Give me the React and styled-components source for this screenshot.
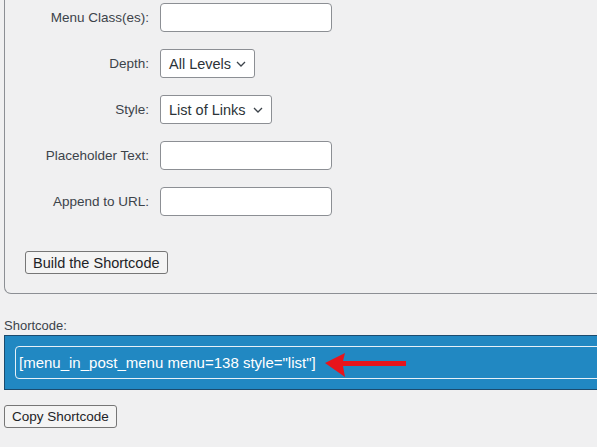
import styled, { createGlobalStyle } from "styled-components";

const GlobalStyle = createGlobalStyle`
  html, body {
    margin: 0;
    padding: 0;
    background: #f0f0f1;
    overflow: hidden;
  }
  body {
    font-family: "Liberation Sans", Arial, sans-serif;
    color: #1d2327;
  }
`;

const Page = styled.div`
  width: 597px;
  height: 447px;
  overflow: hidden;
  position: relative;
`;

const Panel = styled.div`
  margin-left: 4px;
  width: 700px;
  border: 1px solid #8c8f94;
  border-top: none;
  border-radius: 0 0 0 7px;
  padding: 3px 0 19px 0;
`;

const FormGrid = styled.div`
  display: grid;
  grid-template-columns: 144px auto;
  column-gap: 11px;
  row-gap: 17px;
  align-items: center;
  justify-items: start;
`;

const Label = styled.label`
  justify-self: end;
  font-size: 13.5px;
  color: #3c434a;
`;

const TextInput = styled.input`
  box-sizing: border-box;
  width: 172px;
  height: 29px;
  border: 1px solid #8c8f94;
  border-radius: 4px;
  background: #fff;
  font-size: 14px;
  padding: 0 8px;
`;

const SelectBox = styled.div`
  box-sizing: border-box;
  width: ${(p) => p.$width}px;
  height: 29px;
  border: 1px solid #8c8f94;
  border-radius: 3px;
  background: #fff;
  display: flex;
  align-items: center;
  justify-content: space-between;
  padding: 0 8px 0 8px;
  font-size: 14.5px;
  color: #2c3338;
`;

const Chevron = () => (
  <svg width="10" height="6" viewBox="0 0 10 6">
    <path d="M1 1 L5 5 L9 1" fill="none" stroke="#3c434a" strokeWidth="1.3" />
  </svg>
);

const Button = styled.button`
  box-sizing: border-box;
  height: 23px;
  margin-left: ${(p) => p.$indent || 0}px;
  padding: 0 7px;
  border: 1px solid #767676;
  border-radius: 3px;
  background: #f4f4f4;
  font-family: "Liberation Sans", Arial, sans-serif;
  font-size: ${(p) => p.$size || 14.5}px;
  color: #1d2327;
  display: inline-flex;
  align-items: center;
`;

const BuildRow = styled.div`
  margin-top: 35px;
  height: 23px;
`;

const ShortLabel = styled.div`
  margin: 24px 0 0 4px;
  font-size: 13px;
  color: #3c434a;
  line-height: 15px;
`;

const CodeBox = styled.div`
  position: relative;
  margin: 2px 0 0 4px;
  width: 700px;
  box-sizing: border-box;
  background: #2188c2;
  border: 1px solid #1b4b6e;
  padding: 10px;
`;

const CodeField = styled.div`
  box-sizing: border-box;
  height: 33px;
  border: 1px solid #e6f1f8;
  border-radius: 4px;
  display: flex;
  align-items: center;
  padding-left: 3px;
  font-size: 15px;
  color: #fff;
`;

const Arrow = styled.svg`
  position: absolute;
  left: 316px;
  top: 15px;
`;

const CopyRow = styled.div`
  margin: 15px 0 0 4px;
`;

export default function App() {
  return (
    <Page>
      <GlobalStyle />
      <Panel>
        <FormGrid>
          <Label>Menu Class(es):</Label>
          <TextInput />
          <Label>Depth:</Label>
          <SelectBox $width={95}>
            All Levels <Chevron />
          </SelectBox>
          <Label>Style:</Label>
          <SelectBox $width={112}>
            List of Links <Chevron />
          </SelectBox>
          <Label>Placeholder Text:</Label>
          <TextInput />
          <Label>Append to URL:</Label>
          <TextInput />
        </FormGrid>
        <BuildRow>
          <Button $indent={20}>Build the Shortcode</Button>
        </BuildRow>
      </Panel>
      <ShortLabel>Shortcode:</ShortLabel>
      <CodeBox>
        <CodeField>[menu_in_post_menu menu=138 style="list"]</CodeField>
        <Arrow width="90" height="28" viewBox="0 0 90 28">
          <polygon points="4,12 24,2 22,10 85,10 85,15 22,15 24,26" fill="#e8141b" />
        </Arrow>
      </CodeBox>
      <CopyRow>
        <Button $size={13.5}>Copy Shortcode</Button>
      </CopyRow>
    </Page>
  );
}
